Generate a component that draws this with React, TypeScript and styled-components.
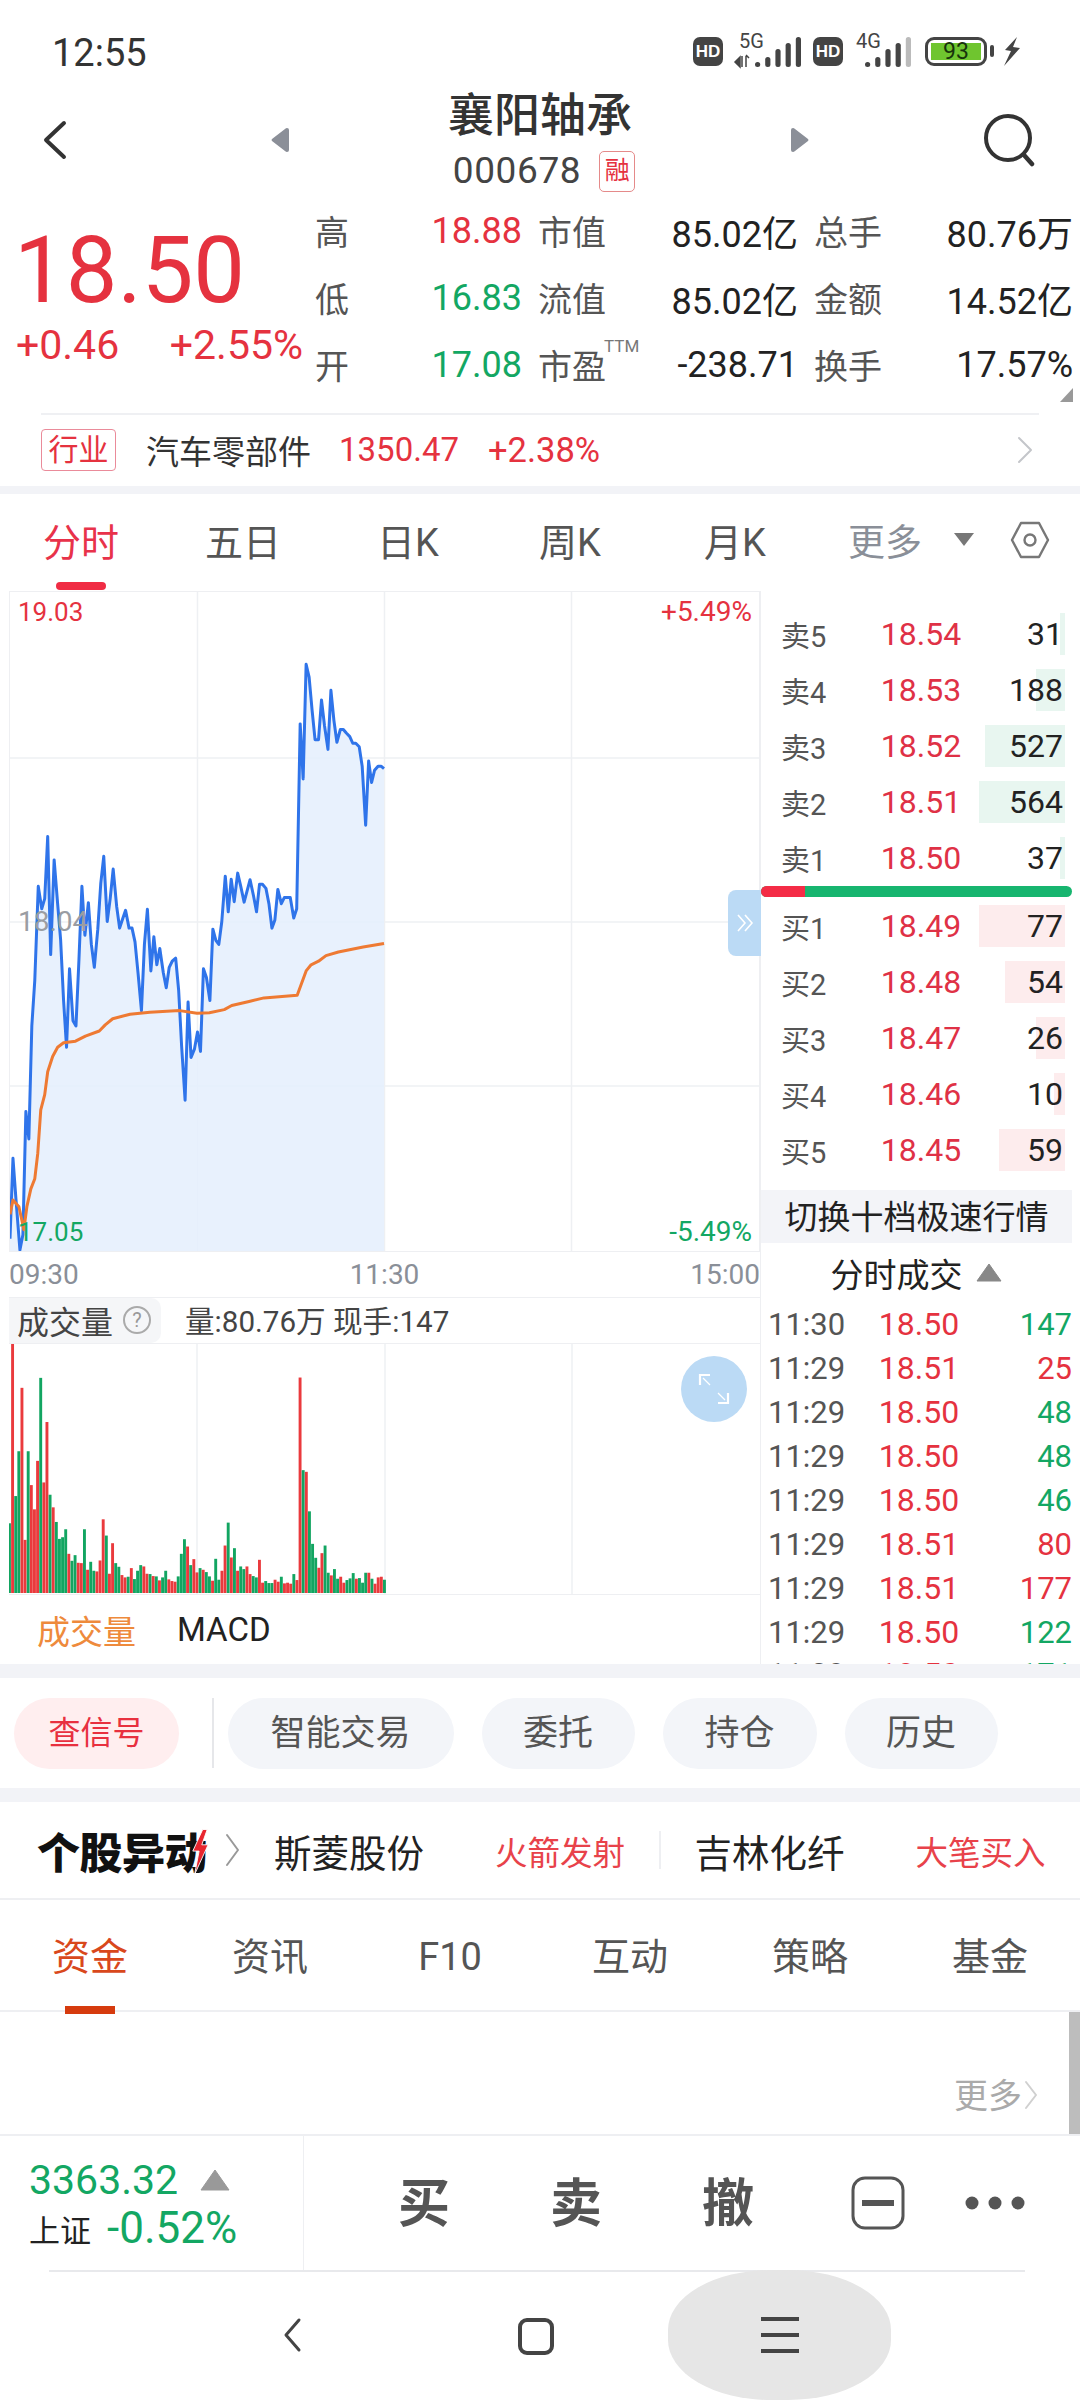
import React from 'react';
import styled, { createGlobalStyle } from 'styled-components';

const RED = '#e5323f';
const GREEN = '#13a763';
const BLUE = '#2f74ea';

const GlobalStyle = createGlobalStyle`
  html, body { margin: 0; padding: 0; background: #fff; }
  * { box-sizing: border-box; }
  body { font-family: Roboto, "Noto Sans CJK SC", sans-serif; color: #222; }
`;

// chart points, measured on a 2x crop of the chart
const PRICE = '18,1448 24,1290 30,1370 38,1470 44,1440 50,1198 56,1252 62,1030 68,940 75,756 82,800 88,780 94,658 100,890 107,704 114,790 120,860 126,980 132,1072 138,918 145,1020 151,1030 157,900 163,756 169,852 176,788 182,870 188,915 195,840 201,750 207,697 214,825 220,780 226,722 233,795 239,838 245,820 251,803 258,838 264,838 270,865 276,925 283,1000 289,870 295,801 302,922 308,855 314,910 320,878 327,925 333,955 339,915 345,903 352,897 358,960 364,1070 371,1176 377,983 383,1092 390,1075 396,1042 402,1080 408,918 414,935 421,980 427,840 433,862 439,870 445,825 452,736 458,806 464,742 470,786 477,730 483,755 490,787 496,765 502,743 509,775 515,806 521,752 527,752 534,760 540,790 546,838 552,822 558,762 565,790 571,778 583,778 590,818 596,800 603,437 609,545 615,320 621,345 627,410 633,468 640,468 646,390 652,440 659,487 665,371 671,430 677,473 684,448 690,448 696,455 703,462 709,475 715,475 722,482 728,520 735,636 741,510 747,552 753,528 760,520 766,520 772,525';
const AVERAGE = '18,1400 24,1372 36,1385 46,1430 52,1385 60,1350 68,1330 74,1280 80,1195 88,1165 94,1120 104,1090 114,1072 126,1063 150,1060 170,1050 198,1040 210,1028 225,1016 260,1007 300,1003 360,1000 395,1005 420,1004 450,998 465,990 500,982 530,975 597,970 615,922 625,910 640,903 655,892 680,885 730,875 772,868';
const VOLUME = 'g610 r70 g528 g393 r202 r660 g393 r495 r568 r422 g172 r487 r305 g524 r562 g606 g657 g652 g628 r702 g723 g706 r729 r730 g628 r750 g726 g753 r755 r722 r598 g647 r762 r670 g730 g741 r766 r773 g771 r745 g778 g753 g736 r740 r762 g763 r769 g770 r782 g773 g753 r779 r784 r786 g770 g702 g658 r680 g736 r718 r758 g745 r750 g757 g770 r783 g717 g780 r753 r677 g608 r713 g685 r753 g740 g748 r740 r763 g769 g773 r720 r789 g784 g790 g790 r780 r786 g771 r791 r789 r792 g763 r781 r171 g450 r455 g574 g672 g714 r744 r700 g677 g759 r767 g748 g777 r771 r789 g781 g776 g760 r777 g775 g789 g759 r759 g777 r792 r773 r771 g780'.split(' ');

const SELLS = [['卖5', '18.54', '31', 5], ['卖4', '18.53', '188', 29], ['卖3', '18.52', '527', 80], ['卖2', '18.51', '564', 86], ['卖1', '18.50', '37', 5]] as const;
const BUYS = [['买1', '18.49', '77', 86], ['买2', '18.48', '54', 60], ['买3', '18.47', '26', 29], ['买4', '18.46', '10', 11], ['买5', '18.45', '59', 66]] as const;
const TICKS = [['11:30', '18.50', '147', 'g'], ['11:29', '18.51', '25', 'r'], ['11:29', '18.50', '48', 'g'], ['11:29', '18.50', '48', 'g'], ['11:29', '18.50', '46', 'g'], ['11:29', '18.51', '80', 'r'], ['11:29', '18.51', '177', 'r'], ['11:29', '18.50', '122', 'g'], ['11:29', '18.50', '171', 'g']];

const Page = styled.div`
  width: 1080px;
  height: 2400px;
  display: flex;
  flex-direction: column;
  overflow: hidden;
  background: #fff;
`;

const StatusBar = styled.div`
  height: 80px;
  flex: none;
  display: flex;
  align-items: flex-start;
  justify-content: space-between;
  padding: 31px 58px 0 52px;
`;
const Clock = styled.div`
  font-size: 38px;
  line-height: 44px;
  color: #333;
`;
const StatusIcons = styled.div`
  display: flex;
  align-items: flex-start;
  margin-top: 6px;
`;
const Hd = styled.div<{ $gap?: number }>`
  width: 30px;
  height: 29px;
  margin-left: ${(p) => p.$gap ?? 0}px;
  border-radius: 7px;
  background: #444;
  color: #fff;
  font: 700 17px/29px "Liberation Sans", sans-serif;
  text-align: center;
`;
const Battery = styled.div`
  width: 62px;
  height: 29px;
  margin-left: 14px;
  border: 3px solid #444;
  border-radius: 9px;
  padding: 3px;
`;
const BatteryFill = styled.div`
  height: 17px;
  background: #6fc52f;
  color: #17330c;
  font-size: 23px;
  line-height: 17px;
  text-align: center;
`;
const ChargeIcon = styled.svg`
  margin-left: 3px;
`;
const SignalSvg = styled.svg<{ $arrows?: boolean }>`
  overflow: visible;
  margin-left: ${(p) => (p.$arrows ? 12 : 6)}px;
  margin-top: -1px;
`;

const Header = styled.div`
  height: 120px;
  flex: none;
  display: flex;
  padding: 0 45px 0 42px;
  position: relative;
`;
const HeaderSide = styled.div`
  display: flex;
  align-items: center;
  height: 120px;
  width: ${(p: { $w: number }) => p.$w}px;
  justify-content: space-between;
`;
const HeaderMid = styled.div`
  flex: 1;
  display: flex;
  flex-direction: column;
  align-items: center;
`;
const Title = styled.div`
  font-size: 46px;
  line-height: 56px;
  font-weight: 500;
  color: #333;
  margin-top: 7px;
`;
const CodeLine = styled.div`
  display: flex;
  align-items: center;
  gap: 18px;
  margin-top: 6px;
  margin-left: 8px;
`;
const Code = styled.span`
  font-size: 37px;
  line-height: 44px;
  color: #444;
  letter-spacing: 0.6px;
`;
const MarginTag = styled.span`
  width: 36px;
  height: 41px;
  border: 1.5px solid #e58a8a;
  border-radius: 5px;
  color: ${RED};
  font-size: 25px;
  line-height: 38px;
  text-align: center;
`;

const Quote = styled.div`
  height: 213px;
  flex: none;
  display: flex;
  position: relative;
`;
const PriceBlock = styled.div`
  width: 315px;
  padding: 30px 0 0 14px;
  flex: none;
`;
const Price = styled.div`
  font-size: 92px;
  line-height: 82px;
  color: ${RED};
`;
const Changes = styled.div`
  display: flex;
  justify-content: space-between;
  margin-top: 13px;
  padding: 0 12px 0 2px;
  font-size: 41px;
  line-height: 40px;
  color: ${RED};
  white-space: nowrap;
`;
const Stats = styled.div`
  flex: 1;
  display: grid;
  grid-template-columns: 207px 260px 259px;
  grid-auto-rows: 67px;
  column-gap: 16px;
  margin-top: -3px;
`;
const Stat = styled.div`
  display: flex;
  justify-content: space-between;
  align-items: center;
`;
const StatLabel = styled.span`
  color: #555;
  font-size: 34px;
  position: relative;
`;
const StatValue = styled.span<{ $c?: string }>`
  color: ${(p) => p.$c || '#222'};
  font-size: 36px;
`;
const Ttm = styled.sup`
  position: absolute;
  left: 66px;
  top: -4px;
  font-size: 17px;
  line-height: 20px;
  color: #777;
  vertical-align: baseline;
`;
const Corner = styled.div`
  position: absolute;
  right: 7px;
  bottom: 11px;
  width: 0;
  height: 0;
  border-left: 13px solid transparent;
  border-bottom: 14px solid #999;
`;

const IndustryRow = styled.div`
  height: 73px;
  flex: none;
  margin: 0 41px 0 41px;
  padding-bottom: 2px;
  border-top: 2px solid #eff0f3;
  display: flex;
  align-items: center;
`;
const IndustryTag = styled.span`
  width: 75px;
  height: 42px;
  border: 1.5px solid #ea8b9a;
  border-radius: 4px;
  color: ${RED};
  font-size: 30px;
  line-height: 39px;
  text-align: center;
  margin-right: 30px;
`;
const IndustryName = styled.span`
  font-size: 33px;
  color: #333;
  margin-right: 28px;
`;
const IndustryNum = styled.span<{ $size: number }>`
  font-size: ${(p) => p.$size}px;
  color: ${RED};
  margin-right: 29px;
`;
const IndustryMore = styled.span`
  margin: 0 6px 0 auto;
  line-height: 0;
`;
const Band = styled.div<{ $h: number }>`
  height: ${(p) => p.$h}px;
  flex: none;
  background: #f2f3f7;
`;

const ChartTabs = styled.div`
  height: 97px;
  flex: none;
  position: relative;
  display: flex;
  align-items: center;
  padding-bottom: 6px;
`;
const ChartTab = styled.div<{ $x: number; $on?: boolean }>`
  position: absolute;
  left: ${(p) => p.$x}px;
  transform: translateX(-50%);
  font-size: 38px;
  color: ${(p) => (p.$on ? '#e8324a' : '#555')};
`;
const MoreTab = styled(ChartTab)`
  color: #8a8f98;
  font-size: 37px;
`;
const IconTab = styled(ChartTab)`
  line-height: 0;
`;
const ChartTabMark = styled.div`
  position: absolute;
  left: 56px;
  bottom: 1px;
  width: 50px;
  height: 8px;
  border-radius: 4px;
  background: #f02c44;
`;

const Market = styled.div`
  height: 1073px;
  flex: none;
  display: flex;
`;
const LeftCol = styled.div`
  width: 760px;
  flex: none;
  padding-left: 9px;
  display: flex;
  flex-direction: column;
`;
const ChartBox = styled.div`
  height: 661px;
  flex: none;
  position: relative;
  border: 1.5px solid #eeeff2;
`;
const ChartSvg = styled.svg`
  display: block;
  width: 100%;
  height: 100%;
`;
const Scale = styled.span<{ $c: string; $pos: 'tl' | 'tr' | 'ml' | 'bl' | 'br' }>`
  position: absolute;
  font-size: ${(p) => (p.$pos === 'tl' || p.$pos === 'bl' ? 26 : 28)}px;
  line-height: 32px;
  color: ${(p) => p.$c};
  ${(p) => (p.$pos === 'tr' || p.$pos === 'br' ? 'right: 7px;' : 'left: 8px;')}
  ${(p) => (p.$pos === 'tl' || p.$pos === 'tr' ? 'top: 4px;' : '')}
  ${(p) => (p.$pos === 'ml' ? 'top: 314px;' : '')}
  ${(p) => (p.$pos === 'bl' || p.$pos === 'br' ? 'bottom: 3px;' : '')}
`;
const Drawer = styled.div`
  position: absolute;
  right: -2px;
  top: 298px;
  width: 33px;
  height: 66px;
  background: #bbdaf5;
  border-radius: 8px 0 0 8px;
  display: flex;
  align-items: center;
  justify-content: center;
`;
const TimeAxis = styled.div`
  height: 45px;
  flex: none;
  display: flex;
  justify-content: space-between;
  align-items: center;
  font-size: 28px;
  color: #8a8f98;
`;
const VolHeader = styled.div`
  height: 47px;
  flex: none;
  border-top: 1.5px solid #eeeff2;
  border-bottom: 1.5px solid #eeeff2;
  display: flex;
  align-items: center;
`;
const VolTab = styled.div`
  width: 152px;
  height: 45px;
  background: #f5f6f8;
  border-radius: 0 10px 10px 0;
  display: flex;
  align-items: center;
  padding: 0 0 2px 8px;
  gap: 10px;
  font-size: 32px;
  color: #444;
`;
const Help = styled.span`
  width: 28px;
  height: 28px;
  border: 2px solid #aaa;
  border-radius: 50%;
  color: #999;
  font-size: 20px;
  line-height: 24px;
  text-align: center;
  flex: none;
`;
const VolInfo = styled.div`
  margin: 0 0 2px 24px;
  font-size: 29.6px;
  color: #444;
  white-space: nowrap;
`;
const VolBox = styled.div`
  height: 251px;
  flex: none;
  position: relative;
  border-bottom: 1.5px solid #eeeff2;
`;
const ZoomBtn = styled.div`
  position: absolute;
  left: 672px;
  top: 12px;
  width: 66px;
  height: 66px;
  border-radius: 50%;
  background: #bbdaf5;
  display: flex;
  align-items: center;
  justify-content: center;
`;
const IndicatorTabs = styled.div`
  flex: 1;
  display: flex;
  align-items: center;
  padding-left: 28px;
  gap: 41px;
  font-size: 33px;
`;
const IndicatorTab = styled.span<{ $on?: boolean }>`
  color: ${(p) => (p.$on ? '#ee8a3c' : '#222')};
`;

const RightCol = styled.div`
  width: 320px;
  flex: none;
  border-left: 1.5px solid #eeeff2;
  padding-top: 15px;
  overflow: hidden;
`;
const BookRow = styled.div`
  height: 56px;
  position: relative;
  display: grid;
  grid-template-columns: 70px 140px 1fr;
  align-items: center;
  padding: 0 17px 0 20px;
`;
const BookLabel = styled.span`
  font-size: 29px;
  color: #555;
  position: relative;
`;
const BookPrice = styled.span`
  font-size: 32px;
  color: #df3146;
  text-align: center;
  position: relative;
`;
const BookVol = styled.span`
  font-size: 32px;
  color: #222;
  text-align: right;
  position: relative;
`;
const Depth = styled.div<{ $buy: boolean }>`
  position: absolute;
  right: 15px;
  top: 7px;
  height: 42px;
  background: ${(p) => (p.$buy ? '#fdeced' : '#e8f6f0')};
`;
const Ratio = styled.div`
  height: 11px;
  margin: 0 8px 1px 0;
  border-radius: 6px;
  overflow: hidden;
  background: #17b56f;
`;
const RatioRed = styled.div`
  width: 44px;
  height: 100%;
  background: #f42c46;
`;
const SwitchBtn = styled.div`
  height: 53px;
  margin: 12px 8px 0 0;
  background: #f3f4f8;
  color: #222;
  font-size: 33px;
  line-height: 55px;
  text-align: center;
  white-space: nowrap;
`;
const TicksTitle = styled.div`
  height: 59px;
  display: flex;
  align-items: center;
  justify-content: center;
  gap: 13px;
  padding-right: 9px;
  font-size: 33px;
  color: #222;
`;
const TickList = styled.div`
  height: 362px;
  overflow: hidden;
`;
const Tick = styled.div`
  height: 44px;
  display: grid;
  grid-template-columns: 101px 100px 1fr;
  align-items: center;
  padding: 0 8px 0 7px;
  font-size: 31px;
  &:nth-child(9) {
    margin-top: -2px;
  }
`;
const TickTime = styled.span`
  color: #555;
`;
const TickPrice = styled.span`
  color: ${RED};
  text-align: center;
  font-size: 32px;
`;
const TickVol = styled.span<{ $c: string }>`
  color: ${(p) => p.$c};
  text-align: right;
`;

const Actions = styled.div`
  height: 110px;
  flex: none;
  display: flex;
  align-items: center;
  padding: 0 0 0 14px;
`;
const Chip = styled.div<{ $w: number; $gap?: number }>`
  width: ${(p) => p.$w}px;
  height: 71px;
  margin-right: ${(p) => p.$gap ?? 28}px;
  border-radius: 36px;
  background: #f3f5f9;
  color: #555;
  font-size: 35px;
  line-height: 71px;
  text-align: center;
`;
const SignalChip = styled(Chip)`
  background: #ffeeef;
  color: #e8303f;
  font-size: 32px;
`;
const VLine = styled.div`
  width: 1.5px;
  height: 70px;
  background: #e6e7ea;
  margin-right: 14px;
`;

const Movers = styled.div`
  height: 98px;
  flex: none;
  display: flex;
  align-items: center;
  padding-left: 37px;
  border-bottom: 2px solid #eeeff2;
`;
const MoversLogo = styled.div`
  position: relative;
  font-size: 43px;
  font-weight: 900;
  color: #111;
  letter-spacing: -0.5px;
  width: 172px;
  white-space: nowrap;
`;
const Bolt = styled.svg`
  position: absolute;
  right: 0;
  top: 8px;
`;
const MoversMore = styled.span`
  margin: 0 34px 0 16px;
  line-height: 0;
`;
const Stock = styled.span<{ $w: number }>`
  width: ${(p) => p.$w}px;
  font-size: 37.5px;
  color: #222;
  flex: none;
  white-space: nowrap;
`;
const MoveTag = styled.span<{ $w: number }>`
  width: ${(p) => p.$w}px;
  font-size: 32.5px;
  color: #e8424a;
  flex: none;
  white-space: nowrap;
`;
const SmallLine = styled.div`
  width: 1.5px;
  height: 38px;
  background: #eeeff2;
  margin-right: 34px;
`;

const InfoTabs = styled.div`
  height: 112px;
  flex: none;
  display: grid;
  grid-template-columns: repeat(6, 180px);
  border-bottom: 2px solid #eeeff2;
`;
const InfoTab = styled.div<{ $on?: boolean }>`
  position: relative;
  text-align: center;
  font-size: 38px;
  line-height: 114px;
  color: ${(p) => (p.$on ? '#d9481c' : '#555')};
  &::after {
    content: '';
    display: ${(p) => (p.$on ? 'block' : 'none')};
    position: absolute;
    left: 65px;
    bottom: 0;
    width: 50px;
    height: 8px;
    background: #d63b0e;
  }
`;
const Content = styled.div`
  height: 122px;
  flex: none;
  position: relative;
  display: flex;
  align-items: flex-end;
  justify-content: flex-end;
  padding: 0 42px 16px 0;
  gap: 2px;
  color: #aaa;
  font-size: 34px;
`;
const ContentMore = styled.span`
  margin-bottom: 8px;
  line-height: 0;
`;
const ScrollThumb = styled.div`
  position: absolute;
  right: 0;
  top: 0;
  width: 11px;
  height: 100%;
  background: #bdbdbd;
`;

const BottomBar = styled.div`
  height: 136px;
  flex: none;
  display: flex;
  border-top: 2px solid #eeeff2;
`;
const IndexBox = styled.div`
  width: 304px;
  flex: none;
  border-right: 1.5px solid #eeeff2;
  padding: 20px 0 0 29px;
`;
const IndexTop = styled.div`
  display: flex;
  align-items: center;
  gap: 22px;
  height: 48px;
  font-size: 41px;
  color: ${GREEN};
`;
const IndexBottom = styled.div`
  display: flex;
  align-items: center;
  gap: 16px;
  height: 52px;
  margin-top: -2px;
  font-size: 44px;
  color: ${GREEN};
`;
const IndexName = styled.span`
  font-size: 31px;
  color: #222;
`;
const TradeBar = styled.div`
  flex: 1;
  display: grid;
  grid-template-columns: 152px 152px 152px 148px 86px;
  padding: 0 0 0 44px;
  align-items: center;
`;
const TradeBtn = styled.div`
  display: flex;
  justify-content: center;
`;
const TradeGlyph = styled(TradeBtn)`
  font-size: 52px;
  font-weight: 700;
  color: #555;
  margin-top: -8px;
`;

const Nav = styled.div`
  height: 130px;
  flex: none;
  display: flex;
  align-items: center;
  padding-left: 283px;
  position: relative;
`;
const NavRule = styled.div`
  position: absolute;
  left: 49px;
  top: 0;
  width: 976px;
  height: 2px;
  background: #e8e9ec;
`;
const HomeKey = styled.div`
  width: 36px;
  height: 37px;
  margin-left: 216px;
  margin-top: 2px;
  border: 4px solid #444;
  border-radius: 9px;
`;
const MenuKey = styled.div`
  width: 223px;
  height: 130px;
  margin-left: 114px;
  border-radius: 46%;
  background: #e6e6e6;
  position: relative;
  display: flex;
  flex-direction: column;
  align-items: center;
  justify-content: center;
  gap: 12px;
`;
const MenuLine = styled.div`
  width: 38px;
  height: 4px;
  background: #444;
`;

const Chevron = ({ dir, w, h, c, s = 3 }: { dir: 'l' | 'r'; w: number; h: number; c: string; s?: number }) => (
  <svg width={w} height={h} viewBox={`0 0 ${w} ${h}`}>
    <polyline
      points={dir === 'l' ? `${w - s},${s} ${s},${h / 2} ${w - s},${h - s}` : `${s},${s} ${w - s},${h / 2} ${s},${h - s}`}
      fill="none"
      stroke={c}
      strokeWidth={s}
      strokeLinecap="round"
      strokeLinejoin="round"
    />
  </svg>
);

const Signal = ({ label, arrows, dim }: { label: string; arrows?: boolean; dim?: boolean }) => {
  const tops = [25, 20, 12, 6, 0];
  const x0 = arrows ? 20 : 16;
  const w = arrows ? 66 : 62;
  return (
    <SignalSvg $arrows={arrows} width={w} height={32} viewBox={`0 0 ${w} 32`}>
      <text x={arrows ? 4 : 7} y={12} fontSize={20} fill="#444" fontFamily="Roboto">{label}</text>
      {arrows && <path d="M0 26 L5 21 V31 Z M7 20 V31 M11 20 V31 M14 22 L11 19" fill="#444" stroke="#444" strokeWidth={1.5} />}
      {tops.map((t, i) => (
        <rect key={i} x={x0 + i * 10.2} y={t + 1} width={5.2} height={30 - t} rx={2.5} fill={dim && i === 4 ? '#bbb' : '#444'} />
      ))}
    </SignalSvg>
  );
};

const App = () => {
  return (
    <Page>
      <GlobalStyle />
      <StatusBar>
        <Clock>12:55</Clock>
        <StatusIcons>
          <Hd>HD</Hd>
          <Signal label="5G" arrows />
          <Hd $gap={12}>HD</Hd>
          <Signal label="4G" dim />
          <Battery>
            <BatteryFill>93</BatteryFill>
          </Battery>
          <ChargeIcon width="32" height="29" viewBox="0 0 32 29">
            <rect x="0" y="8" width="4" height="12" rx="2" fill="#444" />
            <path d="M27 0 L15 13 L21 14 L14 29 L30 11 L23 10 Z" fill="#444" />
          </ChargeIcon>
        </StatusIcons>
      </StatusBar>

      <Header>
        <HeaderSide $w={247}>
          <Chevron dir="l" w={26} h={42} c="#333" s={4} />
          <svg width="18" height="26" viewBox="0 0 18 26"><path d="M16 1 Q18 1 18 3 V23 Q18 25 16 25 Q15 25 14 24 L1 14 Q0 13 1 12 L14 2 Q15 1 16 1 Z" fill="#8b8f98" /></svg>
        </HeaderSide>
        <HeaderMid>
          <Title>襄阳轴承</Title>
          <CodeLine>
            <Code>000678</Code>
            <MarginTag>融</MarginTag>
          </CodeLine>
        </HeaderMid>
        <HeaderSide $w={244}>
          <svg width="18" height="26" viewBox="0 0 18 26"><path d="M2 1 Q0 1 0 3 V23 Q0 25 2 25 Q3 25 4 24 L17 14 Q18 13 17 12 L4 2 Q3 1 2 1 Z" fill="#8b8f98" /></svg>
          <svg width="52" height="54" viewBox="0 0 52 54">
            <circle cx="25" cy="25" r="22" fill="none" stroke="#333" strokeWidth="4" />
            <line x1="41" y1="42" x2="49" y2="51" stroke="#333" strokeWidth="4.5" strokeLinecap="round" />
          </svg>
        </HeaderSide>
      </Header>

      <Quote>
        <PriceBlock>
          <Price>18.50</Price>
          <Changes>
            <span>+0.46</span>
            <span>+2.55%</span>
          </Changes>
        </PriceBlock>
        <Stats>
          <Stat><StatLabel>高</StatLabel><StatValue $c={RED}>18.88</StatValue></Stat>
          <Stat><StatLabel>市值</StatLabel><StatValue>85.02亿</StatValue></Stat>
          <Stat><StatLabel>总手</StatLabel><StatValue>80.76万</StatValue></Stat>
          <Stat><StatLabel>低</StatLabel><StatValue $c={GREEN}>16.83</StatValue></Stat>
          <Stat><StatLabel>流值</StatLabel><StatValue>85.02亿</StatValue></Stat>
          <Stat><StatLabel>金额</StatLabel><StatValue>14.52亿</StatValue></Stat>
          <Stat><StatLabel>开</StatLabel><StatValue $c={GREEN}>17.08</StatValue></Stat>
          <Stat><StatLabel>市盈<Ttm>TTM</Ttm></StatLabel><StatValue>-238.71</StatValue></Stat>
          <Stat><StatLabel>换手</StatLabel><StatValue>17.57%</StatValue></Stat>
        </Stats>
        <Corner />
      </Quote>

      <IndustryRow>
        <IndustryTag>行业</IndustryTag>
        <IndustryName>汽车零部件</IndustryName>
        <IndustryNum $size={33}>1350.47</IndustryNum>
        <IndustryNum $size={34.5}>+2.38%</IndustryNum>
        <IndustryMore><Chevron dir="r" w={16} h={28} c="#c4c6ca" s={2} /></IndustryMore>
      </IndustryRow>
      <Band $h={8} />

      <ChartTabs>
        <ChartTab $x={81} $on>分时</ChartTab>
        <ChartTab $x={243}>五日</ChartTab>
        <ChartTab $x={408}>日K</ChartTab>
        <ChartTab $x={570}>周K</ChartTab>
        <ChartTab $x={735}>月K</ChartTab>
        <MoreTab $x={885}>更多</MoreTab>
        <IconTab $x={964}>
          <svg width="22" height="15" viewBox="0 0 22 15"><path d="M1 1 H21 L11 14 Z" fill="#777" /></svg>
        </IconTab>
        <IconTab $x={1030}>
          <svg width="40" height="38" viewBox="0 0 40 38">
            <path d="M11 2 H29 L38 19 L29 36 H11 L2 19 Z" fill="none" stroke="#777" strokeWidth="2.4" strokeLinejoin="round" />
            <circle cx="20" cy="19" r="5.5" fill="none" stroke="#777" strokeWidth="2.4" />
          </svg>
        </IconTab>
        <ChartTabMark />
      </ChartTabs>

      <Market>
        <LeftCol>
          <ChartBox>
            <ChartSvg viewBox="18 178 1510 1294" preserveAspectRatio="none">
              {[396, 773, 1150].map((x) => (
                <line key={x} x1={x} x2={x} y1={178} y2={1472} stroke="#eef0f3" strokeWidth={1.5} vectorEffect="non-scaling-stroke" />
              ))}
              {[504, 826, 1148].map((y) => (
                <line key={y} x1={18} x2={1528} y1={y} y2={y} stroke="#eef0f3" strokeWidth={1.5} vectorEffect="non-scaling-stroke" />
              ))}
              <polygon points={`18,1472 ${PRICE} 772,1472`} fill="#e4eefd" fillOpacity={0.85} />
              <polyline points={PRICE} fill="none" stroke={BLUE} strokeWidth={3} vectorEffect="non-scaling-stroke" strokeLinejoin="round" />
              <polyline points={AVERAGE} fill="none" stroke="#ee7a33" strokeWidth={3} vectorEffect="non-scaling-stroke" strokeLinejoin="round" />
            </ChartSvg>
            <Scale $pos="tl" $c={RED}>19.03</Scale>
            <Scale $pos="tr" $c={RED}>+5.49%</Scale>
            <Scale $pos="ml" $c="#9a9da3">18.04</Scale>
            <Scale $pos="bl" $c={GREEN}>17.05</Scale>
            <Scale $pos="br" $c={GREEN}>-5.49%</Scale>
            <Drawer>
              <svg width="20" height="20" viewBox="0 0 20 20" fill="none" stroke="#fff" strokeWidth="1.6">
                <polyline points="3,2 10,10 3,18" />
                <polyline points="10,2 17,10 10,18" />
              </svg>
            </Drawer>
          </ChartBox>
          <TimeAxis>
            <span>09:30</span>
            <span>11:30</span>
            <span>15:00</span>
          </TimeAxis>
          <VolHeader>
            <VolTab>成交量<Help>?</Help></VolTab>
            <VolInfo>量:80.76万 现手:147</VolInfo>
          </VolHeader>
          <VolBox>
            <ChartSvg viewBox="0 0 751 251" preserveAspectRatio="none">
              {[188, 376, 563].map((x) => (
                <line key={x} x1={x} x2={x} y1={0} y2={251} stroke="#eef0f3" strokeWidth={1.5} />
              ))}
              {VOLUME.map((v, i) => {
                const top = (Number(v.slice(1)) - 70) / 3;
                return <rect key={i} x={i * 3.125 - 1} y={top} width={2.9} height={250 - top} fill={v[0] === 'r' ? '#ea3a3d' : '#12a561'} />;
              })}
            </ChartSvg>
            <ZoomBtn>
              <svg width="32" height="32" viewBox="0 0 32 32" fill="none" stroke="#fff" strokeWidth="2.2">
                <polyline points="2,12 2,2 12,2" />
                <polyline points="20,30 30,30 30,20" />
                <line x1="5" y1="5" x2="12" y2="12" strokeWidth="1.2" />
                <line x1="20" y1="20" x2="27" y2="27" strokeWidth="1.2" />
              </svg>
            </ZoomBtn>
          </VolBox>
          <IndicatorTabs>
            <IndicatorTab $on>成交量</IndicatorTab>
            <IndicatorTab>MACD</IndicatorTab>
          </IndicatorTabs>
        </LeftCol>

        <RightCol>
          {SELLS.map(([l, p, v, w]) => (
            <BookRow key={l}>
              <Depth $buy={false} style={{ width: w }} />
              <BookLabel>{l}</BookLabel>
              <BookPrice>{p}</BookPrice>
              <BookVol>{v}</BookVol>
            </BookRow>
          ))}
          <Ratio><RatioRed /></Ratio>
          {BUYS.map(([l, p, v, w]) => (
            <BookRow key={l}>
              <Depth $buy style={{ width: w }} />
              <BookLabel>{l}</BookLabel>
              <BookPrice>{p}</BookPrice>
              <BookVol>{v}</BookVol>
            </BookRow>
          ))}
          <SwitchBtn>切换十档极速行情</SwitchBtn>
          <TicksTitle>
            分时成交
            <svg width="26" height="19" viewBox="0 0 26 19"><path d="M13 1 L25 18 H1 Z" fill="#888" stroke="#888" strokeLinejoin="round" /></svg>
          </TicksTitle>
          <TickList>
            {TICKS.map(([t, p, v, c], i) => (
              <Tick key={i}>
                <TickTime>{t}</TickTime>
                <TickPrice>{p}</TickPrice>
                <TickVol $c={c === 'r' ? RED : GREEN}>{v}</TickVol>
              </Tick>
            ))}
          </TickList>
        </RightCol>
      </Market>
      <Band $h={14} />

      <Actions>
        <SignalChip $w={165} $gap={33}>查信号</SignalChip>
        <VLine />
        <Chip $w={226}>智能交易</Chip>
        <Chip $w={153}>委托</Chip>
        <Chip $w={154}>持仓</Chip>
        <Chip $w={153} $gap={0}>历史</Chip>
      </Actions>
      <Band $h={14} />

      <Movers>
        <MoversLogo>
          个股异动
          <Bolt width="18" height="50" viewBox="0 0 20 50"><path d="M13 0 L2 24 H9 L4 50 L19 17 H12 L18 0 Z" fill="#e8262f" stroke="#fff" strokeWidth="1" /></Bolt>
        </MoversLogo>
        <MoversMore><Chevron dir="r" w={15} h={34} c="#999" s={2} /></MoversMore>
        <Stock $w={221}>斯菱股份</Stock>
        <MoveTag $w={164}>火箭发射</MoveTag>
        <SmallLine />
        <Stock $w={221}>吉林化纤</Stock>
        <MoveTag $w={131}>大笔买入</MoveTag>
      </Movers>

      <InfoTabs>
        <InfoTab $on>资金</InfoTab>
        <InfoTab>资讯</InfoTab>
        <InfoTab>F10</InfoTab>
        <InfoTab>互动</InfoTab>
        <InfoTab>策略</InfoTab>
        <InfoTab>基金</InfoTab>
      </InfoTabs>

      <Content>
        更多
        <ContentMore><Chevron dir="r" w={14} h={30} c="#d0d0d0" s={2} /></ContentMore>
        <ScrollThumb />
      </Content>

      <BottomBar>
        <IndexBox>
          <IndexTop>
            3363.32
            <svg width="30" height="22" viewBox="0 0 30 22"><path d="M15 1 L29 21 H1 Z" fill="#999" stroke="#999" strokeLinejoin="round" /></svg>
          </IndexTop>
          <IndexBottom>
            <IndexName>上证</IndexName>
            -0.52%
          </IndexBottom>
        </IndexBox>
        <TradeBar>
          <TradeGlyph>买</TradeGlyph>
          <TradeGlyph>卖</TradeGlyph>
          <TradeGlyph>撤</TradeGlyph>
          <TradeBtn>
            <svg width="54" height="54" viewBox="0 0 54 54" fill="none" stroke="#555">
              <rect x="2" y="2" width="50" height="50" rx="12" strokeWidth="3" />
              <line x1="11" y1="27" x2="43" y2="27" strokeWidth="6" />
            </svg>
          </TradeBtn>
          <TradeBtn>
            <svg width="60" height="14" viewBox="0 0 60 14" fill="#555">
              <circle cx="7" cy="7" r="6.5" />
              <circle cx="30" cy="7" r="6.5" />
              <circle cx="53" cy="7" r="6.5" />
            </svg>
          </TradeBtn>
        </TradeBar>
      </BottomBar>

      <Nav>
        <NavRule />
        <Chevron dir="l" w={19} h={36} c="#444" s={3} />
        <HomeKey />
        <MenuKey>
          <MenuLine />
          <MenuLine />
          <MenuLine />
        </MenuKey>
      </Nav>
    </Page>
  );
};

export default App;
